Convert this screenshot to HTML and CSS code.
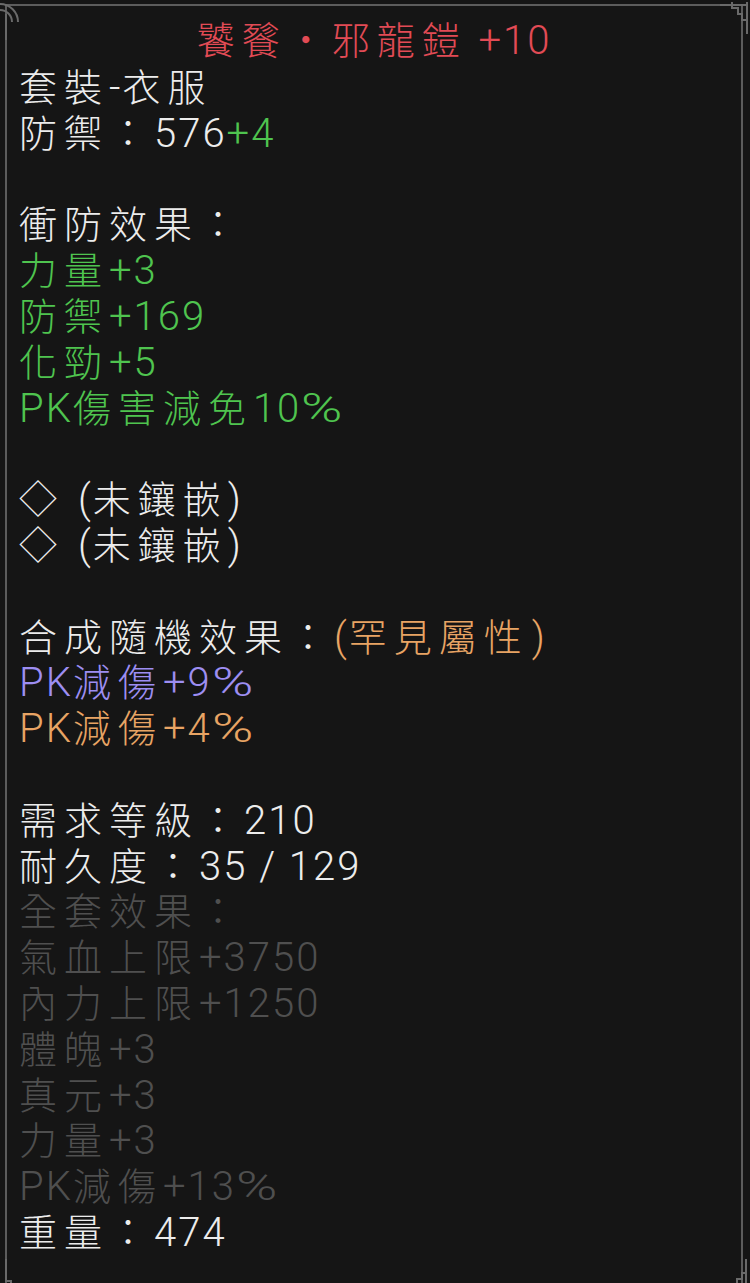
FILE: index.html
```html
<!DOCTYPE html>
<html lang="zh-Hant">
<head>
<meta charset="utf-8">
<title>饕餮・邪龍鎧</title>
<link rel="stylesheet" href="styles.css">
</head>
<body>
<div class="tip">
  <svg class="orn tl" width="24" height="40" viewBox="0 0 24 40"><path d="M0 4 A18 18 0 0 1 18 22" /><path d="M0 10 A12 12 0 0 1 12 22"/><path d="M6 14 V40"/></svg>
  <svg class="orn tr" width="30" height="34" viewBox="0 0 30 34"><path d="M0 5 H28"/><path d="M12 2 V8 H18 V14 H22 V20 H27"/><path d="M27 2 V34"/></svg>
  <svg class="orn bl" width="30" height="30" viewBox="0 0 30 30"><path d="M6 0 V22 H11 V27 H18 V30"/><path d="M11 22 V30"/></svg>
  <svg class="orn br" width="30" height="30" viewBox="0 0 30 30"><path d="M26 0 V30"/><path d="M26 14 H22 V20 H17 V26 H10 V30"/></svg>

  <div class="line title">饕餮・邪龍鎧<span class="a"> +10</span></div>
  <div class="line">套裝<span class="a">-</span>衣服</div>
  <div class="line">防禦：<span class="a">576</span><span class="a g">+4</span></div>
  <div class="line"></div>
  <div class="line">衝防效果：</div>
  <div class="line g">力量<span class="a">+3</span></div>
  <div class="line g">防禦<span class="a">+169</span></div>
  <div class="line g">化勁<span class="a">+5</span></div>
  <div class="line g"><span class="a">PK</span>傷害減免<span class="a">10</span><span class="pc">%</span></div>
  <div class="line"></div>
  <div class="line"><span class="dia">◇</span><span class="a">(</span>未鑲嵌<span class="a">)</span></div>
  <div class="line"><span class="dia">◇</span><span class="a">(</span>未鑲嵌<span class="a">)</span></div>
  <div class="line"></div>
  <div class="line">合成隨機效果：<span class="o"><span class="a">(</span>罕見屬性<span class="a cp">)</span></span></div>
  <div class="line p"><span class="a">PK</span>減傷<span class="a">+9</span><span class="pc">%</span></div>
  <div class="line o"><span class="a">PK</span>減傷<span class="a">+4</span><span class="pc">%</span></div>
  <div class="line"></div>
  <div class="line">需求等級：<span class="a">210</span></div>
  <div class="line">耐久度：<span class="a">35 / 129</span></div>
  <div class="line d">全套效果：</div>
  <div class="line d">氣血上限<span class="a">+3750</span></div>
  <div class="line d">內力上限<span class="a">+1250</span></div>
  <div class="line d">體魄<span class="a">+3</span></div>
  <div class="line d">真元<span class="a">+3</span></div>
  <div class="line d">力量<span class="a">+3</span></div>
  <div class="line d"><span class="a">PK</span>減傷<span class="a">+13</span><span class="pc">%</span></div>
  <div class="line">重量：<span class="a">474</span></div>
</div>
</body>
</html>
```

FILE: styles.css
```css
html, body {
  margin: 0;
  padding: 0;
  background: #151515;
}

body {
  width: 750px;
  height: 1283px;
  overflow: hidden;
}

.tip {
  position: relative;
  box-sizing: border-box;
  margin: 4px 7px 0 5px;
  height: 1290px;
  border-top: 2px solid #5c5c5c;
  border-left: 2px solid #5c5c5c;
  border-right: 2px solid #5c5c5c;
  padding: 8px 0 0 12px;
  font-family: "Noto Sans CJK TC", "Noto Sans CJK SC", sans-serif;
  font-weight: 300;
  font-size: 38px;
  letter-spacing: 7px;
  color: #ececec;
}

.line {
  height: 45.8px;
  line-height: 45.8px;
  white-space: pre;
}

.title {
  height: 48px;
  line-height: 48px;
  text-align: center;
  color: #e24b55;
  margin-left: -12px;
}

.a {
  font-family: "Roboto", "Liberation Sans", sans-serif;
  font-weight: 300;
  font-size: 40px;
  letter-spacing: 2px;
}

.cp {
  margin-left: 3px;
}

.pc {
  display: inline-block;
  width: 50px;
  font-family: "Roboto", sans-serif;
  font-weight: 300;
  font-size: 40px;
  letter-spacing: 0;
  transform: scaleX(1.4);
  transform-origin: left center;
}

.dia {
  letter-spacing: 0;
  margin-right: 14px;
  display: inline-block;
  width: 45px;
}

.g { color: #4fc44f; }
.o { color: #e8a464; }
.p { color: #9d8ef2; }
.d { color: #4f4f4f; }

.orn {
  position: absolute;
  fill: none;
  stroke: #6a6a6a;
  stroke-width: 2;
}

.tl { left: -7px; top: -6px; }
.tr { right: -9px; top: -6px; }
.bl { left: -7px; bottom: 5px; }
.br { right: -9px; bottom: 5px; }
```
